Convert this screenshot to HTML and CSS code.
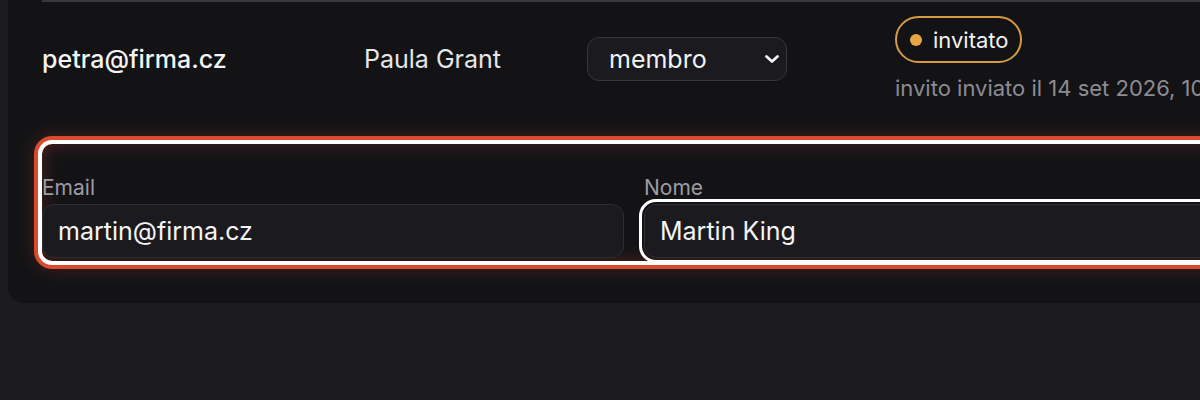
FILE: index.html
```html
<!DOCTYPE html>
<html lang="it">
<head>
<meta charset="utf-8">
<title>Membri</title>
<link rel="stylesheet" href="styles.css">
</head>
<body>
<div class="page">
  <section class="card">
    <div class="member-row">
      <div class="cell email">petra@firma.cz</div>
      <div class="cell name">Paula Grant</div>
      <div class="cell role">
        <div class="select">
          <span class="select-value">membro</span>
          <svg class="chevron" width="16" height="10" viewBox="0 0 16 10"><polyline points="2.5,2.5 8,7.5 13.5,2.5" fill="none" stroke="#f2f2f2" stroke-width="2.8" stroke-linecap="round" stroke-linejoin="round"/></svg>
        </div>
      </div>
      <div class="cell status">
        <span class="badge"><span class="dot"></span>invitato</span>
        <span class="sent">invito inviato il 14 set 2026, 10:32</span>
      </div>
    </div>
    <form class="invite-form">
      <label class="field">
        <span class="field-label">Email</span>
        <span class="input">martin@firma.cz</span>
      </label>
      <label class="field">
        <span class="field-label">Nome</span>
        <span class="input focused">Martin King</span>
      </label>
    </form>
  </section>
</div>
</body>
</html>
```
FILE: styles.css
```css
html, body {
  margin: 0;
  padding: 0;
}
body {
  background: #1c1c20;
  font-family: Inter, "Noto Sans", sans-serif;
  color: #f2f2f2;
  overflow: hidden;
  width: 1200px;
  height: 400px;
}
.page {
  padding-left: 8px;
}
.card {
  width: 1400px;
  background: #131316;
  border-radius: 0 0 16px 16px;
  padding: 0 34px 42px 34px;
  box-sizing: border-box;
}
.member-row {
  display: grid;
  grid-template-columns: 322px 223px 308px 1fr;
  align-items: center;
  border-top: 2px solid #37373c;
  padding-top: 14px;
}
.cell {
  white-space: nowrap;
}
.email {
  font-size: 25px;
  font-weight: 500;
  color: #f4f4f4;
}
.name {
  font-size: 25px;
  color: #e6e6e8;
}
.select {
  width: 200px;
  height: 44px;
  box-sizing: border-box;
  border: 1px solid #36363b;
  border-radius: 12px;
  background: #1b1b1f;
  display: flex;
  align-items: center;
  justify-content: space-between;
  padding: 0 6px 0 21px;
  font-size: 25px;
  color: #f2f2f2;
}
.status {
  display: flex;
  flex-direction: column;
  align-items: flex-start;
  gap: 11px;
}
.badge {
  display: inline-flex;
  align-items: center;
  gap: 11px;
  height: 47px;
  box-sizing: border-box;
  border: 2px solid #d69a42;
  border-radius: 24px;
  padding: 0 11px 0 13px;
  font-size: 22px;
  color: #f2f2f2;
}
.dot {
  width: 12px;
  height: 12px;
  border-radius: 50%;
  background: #e6a646;
}
.sent {
  font-size: 22px;
  line-height: 28px;
  color: #8c8c92;
}
.invite-form {
  margin-top: 42px;
  display: grid;
  grid-template-columns: 582px 1fr;
  column-gap: 20px;
  padding: 32px 0 3px 0;
  border-radius: 10px;
  box-shadow:
    0 0 0 4px #ffffff,
    0 0 0 8px #d94a2f,
    0 0 18px 8px rgba(217, 74, 47, 0.25),
    inset 0 0 18px rgba(217, 74, 47, 0.3);
}
.field {
  display: flex;
  flex-direction: column;
  gap: 4px;
}
.field-label {
  font-size: 21px;
  line-height: 24px;
  color: #9c9ca2;
}
.input {
  height: 54px;
  box-sizing: border-box;
  border: 1px solid #2d2d32;
  border-radius: 12px;
  background: #1b1b1f;
  display: flex;
  align-items: center;
  padding: 0 15px;
  font-size: 25px;
  color: #f4f4f4;
}
.input.focused {
  outline: 3px solid #ffffff;
  outline-offset: 2px;
}
```
